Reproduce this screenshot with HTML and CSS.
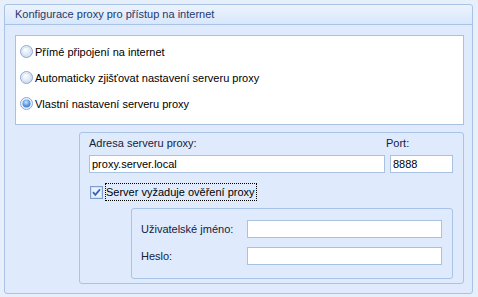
FILE: index.html
```html
<!DOCTYPE html>
<html>
<head>
<meta charset="utf-8">
<link rel="stylesheet" href="styles.css">
</head>
<body>
<div class="group">
  <div class="group-title">Konfigurace proxy pro přístup na internet</div>
  <div class="group-body">
    <div class="options">
      <label class="radio-row">
        <svg class="radio" width="13" height="13" viewBox="0 0 13 13"><defs><radialGradient id="rg1" cx="0.4" cy="0.35" r="0.7"><stop offset="0" stop-color="#ffffff"/><stop offset="1" stop-color="#c9daf2"/></radialGradient></defs><circle cx="6.5" cy="6.5" r="6" fill="url(#rg1)" stroke="#8aa8d2"/><circle cx="6.5" cy="6.5" r="4.3" fill="none" stroke="#d6e3f5"/></svg>
        <span>Přímé připojení na internet</span>
      </label>
      <label class="radio-row">
        <svg class="radio" width="13" height="13" viewBox="0 0 13 13"><circle cx="6.5" cy="6.5" r="6" fill="url(#rg1)" stroke="#8aa8d2"/><circle cx="6.5" cy="6.5" r="4.3" fill="none" stroke="#d6e3f5"/></svg>
        <span>Automaticky zjišťovat nastavení serveru proxy</span>
      </label>
      <label class="radio-row">
        <svg class="radio" width="13" height="13" viewBox="0 0 13 13"><defs><radialGradient id="rg2" cx="0.45" cy="0.35" r="0.7"><stop offset="0" stop-color="#cfe6ff"/><stop offset="0.6" stop-color="#5a9ae6"/><stop offset="1" stop-color="#3b78cc"/></radialGradient></defs><circle cx="6.5" cy="6.5" r="6" fill="#eaf2fc" stroke="#8aa8d2"/><circle cx="6.5" cy="6.5" r="4" fill="url(#rg2)"/></svg>
        <span>Vlastní nastavení serveru proxy</span>
      </label>
    </div>
    <div class="proxy-panel">
      <div class="server-grid">
        <div class="lbl">Adresa serveru proxy:</div>
        <div class="lbl port-lbl">Port:</div>
        <div class="input addr">proxy.server.local</div>
        <div class="input port">8888</div>
      </div>
      <div class="check-row">
        <svg class="check" width="13" height="13" viewBox="0 0 13 13"><rect x="0.5" y="0.5" width="12" height="12" fill="#e9f1fc" stroke="#7d9fd0"/><rect x="1.5" y="1.5" width="10" height="10" fill="none" stroke="#d2e0f4"/><path d="M3 6.2 L5.3 8.8 L10 3.3" fill="none" stroke="#3d64b0" stroke-width="1.8"/></svg>
        <span class="focus">Server vyžaduje ověření proxy</span>
      </div>
      <div class="cred-box">
        <div class="cred-row">
          <span class="lbl cred-lbl">Uživatelské jméno:</span>
          <div class="input cred"></div>
        </div>
        <div class="cred-row">
          <span class="lbl cred-lbl">Heslo:</span>
          <div class="input cred"></div>
        </div>
      </div>
    </div>
  </div>
</div>
</body>
</html>
```

FILE: styles.css
```css
html, body {
  margin: 0;
  padding: 0;
}
body {
  background: #e7effb;
  font-family: "Liberation Sans", "DejaVu Sans", sans-serif;
  font-size: 11px;
  color: #000;
  width: 478px;
  height: 297px;
  overflow: hidden;
}
.group {
  margin: 4px 0 0 4px;
  width: 469px;
  height: 290px;
  border: 1px solid #a8c3e6;
  border-radius: 3px;
  background: #dfebfd;
  box-sizing: border-box;
  display: flex;
  flex-direction: column;
}
.group-title {
  height: 20px;
  box-sizing: border-box;
  border-bottom: 1px solid #a8c3e6;
  background: linear-gradient(#ecf3fd, #d9e7fb);
  color: #1e3a6d;
  font-size: 11px;
  padding: 3px 0 0 10px;
  border-radius: 3px 3px 0 0;
}
.group-body {
  padding: 10px 8px 0 10px;
  display: flex;
  flex-direction: column;
}
.options {
  background: #fff;
  border: 1px solid #a9c2e2;
  height: 90px;
  box-sizing: border-box;
  padding: 9px 0 0 4px;
  display: flex;
  flex-direction: column;
  gap: 13px;
}
.radio-row {
  display: flex;
  align-items: center;
  gap: 2px;
  height: 13px;
}
.radio { display: block; flex: none; }
.proxy-panel {
  margin: 7px 0 0 64px;
  height: 152px;
  box-sizing: border-box;
  border: 1px solid #a8c3e6;
  border-radius: 3px;
  padding: 4px 0 0 9px;
  display: flex;
  flex-direction: column;
}
.lbl {
  color: #16213f;
}
.server-grid {
  display: grid;
  grid-template-columns: 296px 63px;
  column-gap: 5px;
  row-gap: 6px;
}
.port-lbl { margin-left: -4px; }
.input {
  background: #fff;
  border: 1px solid #a9c2e2;
  height: 18px;
  box-sizing: border-box;
  padding: 2px 0 0 2px;
  line-height: 13px;
  color: #000;
}
.check-row {
  margin-top: 10px;
  display: flex;
  align-items: center;
  gap: 2px;
  height: 18px;
  padding-left: 1px;
}
.check { display: block; flex: none; }
.focus {
  border: 1px dotted #000;
  padding: 2px 1px 2px 0;
  line-height: 12px;
}
.cred-box {
  margin: 7px 0 0 42px;
  width: 322px;
  height: 71px;
  box-sizing: border-box;
  border: 1px solid #a8c3e6;
  border-radius: 3px;
  padding: 11px 0 0 9px;
  display: flex;
  flex-direction: column;
  gap: 9px;
}
.cred-row {
  display: flex;
  align-items: center;
}
.cred-lbl {
  width: 106px;
}
.cred {
  width: 195px;
}
```
